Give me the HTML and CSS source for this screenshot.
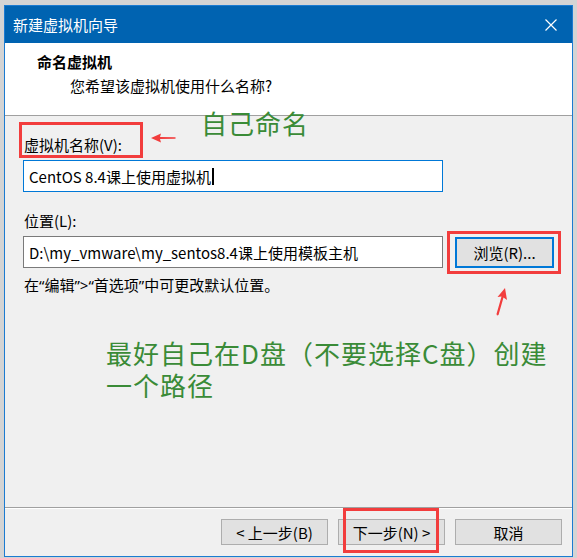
FILE: index.html
```
<!DOCTYPE html>
<html lang="zh-CN">

<head>
    <meta charset="UTF-8">
    <meta name="viewport" content="width=device-width, initial-scale=1.0">
    <title>新建虚拟机向导</title>
    <link rel="stylesheet" href="styles.css">
</head>

<body>
    <div class="window">
        <div class="titlebar">
            <span class="title">新建虚拟机向导</span>
            <svg class="close" width="12" height="12" viewBox="0 0 12 12">
                <path d="M0.5 0.5 L11.5 11.5 M11.5 0.5 L0.5 11.5" stroke="#fff" stroke-width="1.2" fill="none" />
            </svg>
        </div>

        <div class="header">
            <div class="header-title">命名虚拟机</div>
            <div class="header-sub">您希望该虚拟机使用什么名称?</div>
        </div>

        <div class="content">
            <div class="field-label">虚拟机名称(V):</div>
            <div class="text-box focused">CentOS 8.4课上使用虚拟机<span class="caret"></span></div>

            <div class="field-label second">位置(L):</div>
            <div class="path-row">
                <div class="text-box">D:\my_vmware\my_sentos8.4课上使用模板主机</div>
                <button class="browse-btn">浏览(R)...</button>
            </div>
            <div class="hint">在<span class="latin">“</span>编辑<span class="latin">”&gt;“</span>首选项<span class="latin">”</span>中可更改默认位置。</div>
        </div>

        <div class="footer">
            <button class="footer-btn">&lt; 上一步(B)</button>
            <button class="footer-btn">下一步(N) &gt;</button>
            <button class="footer-btn">取消</button>
        </div>

        <!-- annotations drawn over the dialog -->
        <div class="mark mark-name"></div>
        <svg class="arrow arrow-left" width="26" height="10" viewBox="0 0 26 10">
            <polygon points="0,5 10,0.5 9,4 24,4.2 25,5 24,5.8 9,6 10,9.5" fill="#f23d3d" />
        </svg>
        <div class="note note-name">自己命名</div>

        <div class="mark mark-browse"></div>
        <svg class="arrow arrow-up" width="22" height="30" viewBox="0 0 22 30">
            <polygon points="15,1 17,13 13.5,10.5 8.5,28 7,28.5 6.5,27 11.5,9.5 7.5,10" fill="#f23d3d" />
        </svg>
        <div class="note note-path">
            <div>最好自己在D盘（不要选择C盘）创建</div>
            <div>一个路径</div>
        </div>

        <div class="mark mark-next"></div>
    </div>
</body>

</html>
```

FILE: styles.css
```
body {
    margin: 0;
    background-color: #d4d4d4;
    font-family: "Noto Sans CJK SC", "Noto Sans", sans-serif;
    font-size: 15px;
    color: #000;
}

.window {
    position: relative;
    width: 567px;
    margin: 5px 0 0 4px;
    border: 1px solid #1c7bd1;
    background-color: #f0f0f0;
}

.titlebar {
    height: 37px;
    background-color: #0063b1;
    display: flex;
    align-items: center;
    justify-content: space-between;
    padding: 0 15px 0 8px;
    color: #fff;
}

.title {
    font-size: 15px;
    line-height: 20px;
}

.header {
    height: 73px;
    box-sizing: border-box;
    background-color: #fff;
    border-bottom: 1px solid #a0a0a0;
    padding: 9px 0 0 32px;
}

.header-title {
    font-weight: bold;
    line-height: 20px;
}

.header-sub {
    line-height: 20px;
    margin-top: 4px;
    padding-left: 33px;
}

.content {
    height: 391px;
    box-sizing: border-box;
    padding: 19px 0 0 18px;
}

.field-label {
    line-height: 20px;
    padding-left: 1px;
}

.field-label.second {
    margin-top: 19px;
}

.text-box {
    width: 420px;
    height: 32px;
    box-sizing: border-box;
    margin-top: 5px;
    border: 1px solid #7a7a7a;
    background-color: #fff;
    padding: 0 5px;
    display: flex;
    align-items: center;
    white-space: nowrap;
}

.text-box.focused {
    border-color: #0078d7;
}

.caret {
    display: inline-block;
    width: 2px;
    height: 17px;
    margin-left: 1px;
    background-color: #000;
}

.path-row {
    display: flex;
    align-items: flex-end;
    gap: 12px;
}

.browse-btn {
    width: 99px;
    height: 31px;
    box-sizing: border-box;
    border: 2px solid #0078d7;
    background-color: #e1e1e1;
    font-family: inherit;
    font-size: 15px;
    color: #000;
    padding: 0;
}

.hint {
    margin-top: 7px;
    line-height: 20px;
    padding-left: 1px;
}

.latin {
    font-family: "Noto Sans", sans-serif;
}

.footer {
    height: 49px;
    box-sizing: border-box;
    border-top: 1px solid #a0a0a0;
    box-shadow: inset 0 1px 0 #fff;
    display: flex;
    justify-content: flex-end;
    gap: 10px;
    padding: 11px 10px 0 0;
}

.footer-btn {
    width: 107px;
    height: 26px;
    box-sizing: border-box;
    border: 1px solid #adadad;
    background-color: #e1e1e1;
    font-family: inherit;
    font-size: 15px;
    color: #000;
    padding: 0;
}

.mark {
    position: absolute;
    border: 3px solid #f23d3d;
    box-sizing: border-box;
}

.mark-name {
    left: 14px;
    top: 116px;
    width: 124px;
    height: 36px;
}

.mark-browse {
    left: 442px;
    top: 225px;
    width: 114px;
    height: 43px;
}

.mark-next {
    left: 338px;
    top: 502px;
    width: 96px;
    height: 45px;
}

.arrow {
    position: absolute;
}

.arrow-left {
    left: 146px;
    top: 127px;
}

.arrow-up {
    left: 485px;
    top: 281px;
}

.note {
    position: absolute;
    color: #3a8b37;
    font-size: 26px;
    line-height: 32px;
    letter-spacing: 1px;
    white-space: nowrap;
}

.note-name {
    left: 196px;
    top: 101px;
}

.note-path {
    left: 101px;
    top: 331px;
}
```
